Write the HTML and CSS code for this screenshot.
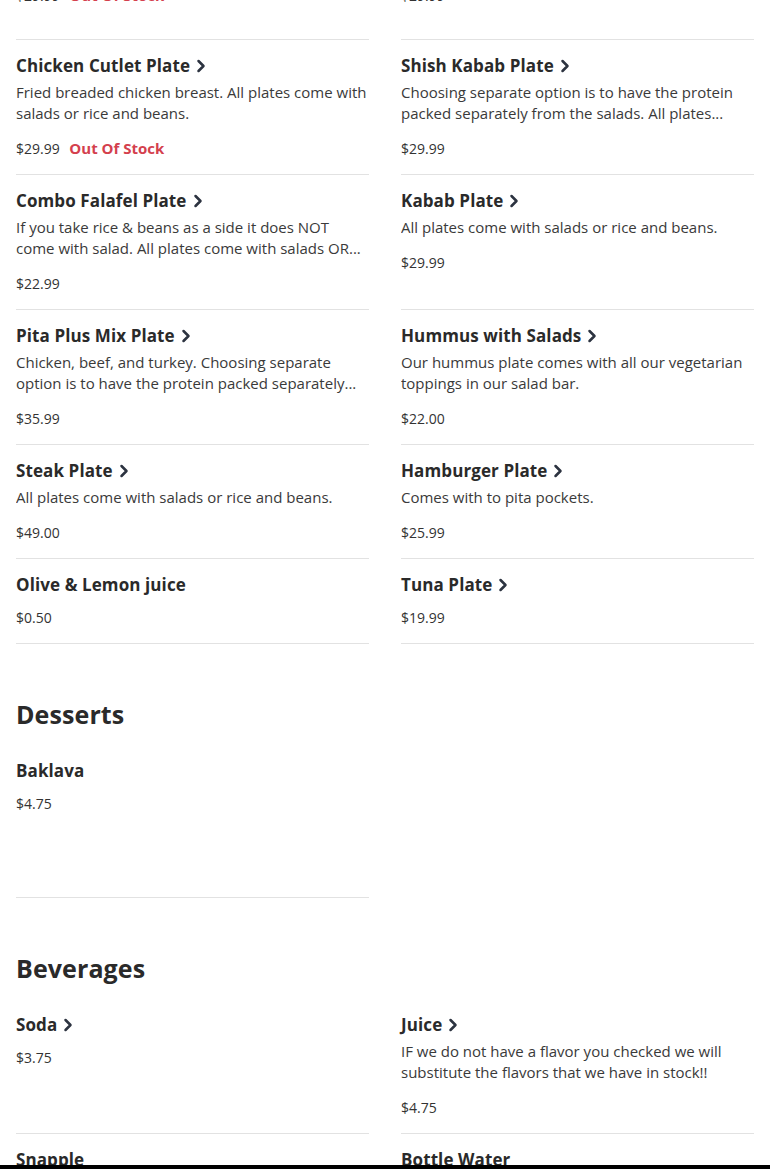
FILE: index.html
```html
<!DOCTYPE html>
<html lang="en">
<head>
<meta charset="utf-8">
<title>Menu</title>
<link rel="stylesheet" href="styles.css">
</head>
<body>
<main class="menu">
  <div class="grid lead">
    <div class="item stub"><div class="price">$29.99 <span class="oos">Out Of Stock</span></div></div>
    <div class="item stub"><div class="price">$29.99</div></div>
  </div>
  <div class="grid">
    <div class="item">
      <div class="name">Chicken Cutlet Plate <svg class="chev" viewBox="0 0 10 14"><path d="M2.5 2 L7.5 7 L2.5 12"/></svg></div>
      <p class="desc">Fried breaded chicken breast. All plates come with salads or rice and beans.</p>
      <div class="price">$29.99 <span class="oos">Out Of Stock</span></div>
    </div>
    <div class="item">
      <div class="name">Shish Kabab Plate <svg class="chev" viewBox="0 0 10 14"><path d="M2.5 2 L7.5 7 L2.5 12"/></svg></div>
      <p class="desc">Choosing separate option is to have the protein packed separately from the salads. All plates...</p>
      <div class="price">$29.99</div>
    </div>
    <div class="item">
      <div class="name">Combo Falafel Plate <svg class="chev" viewBox="0 0 10 14"><path d="M2.5 2 L7.5 7 L2.5 12"/></svg></div>
      <p class="desc">If you take rice &amp; beans as a side it does NOT come with salad. All plates come with salads OR...</p>
      <div class="price">$22.99</div>
    </div>
    <div class="item">
      <div class="name">Kabab Plate <svg class="chev" viewBox="0 0 10 14"><path d="M2.5 2 L7.5 7 L2.5 12"/></svg></div>
      <p class="desc">All plates come with salads or rice and beans.</p>
      <div class="price">$29.99</div>
    </div>
    <div class="item">
      <div class="name">Pita Plus Mix Plate <svg class="chev" viewBox="0 0 10 14"><path d="M2.5 2 L7.5 7 L2.5 12"/></svg></div>
      <p class="desc">Chicken, beef, and turkey. Choosing separate option is to have the protein packed separately...</p>
      <div class="price">$35.99</div>
    </div>
    <div class="item">
      <div class="name">Hummus with Salads <svg class="chev" viewBox="0 0 10 14"><path d="M2.5 2 L7.5 7 L2.5 12"/></svg></div>
      <p class="desc">Our hummus plate comes with all our vegetarian toppings in our salad bar.</p>
      <div class="price">$22.00</div>
    </div>
    <div class="item">
      <div class="name">Steak Plate <svg class="chev" viewBox="0 0 10 14"><path d="M2.5 2 L7.5 7 L2.5 12"/></svg></div>
      <p class="desc">All plates come with salads or rice and beans.</p>
      <div class="price">$49.00</div>
    </div>
    <div class="item">
      <div class="name">Hamburger Plate <svg class="chev" viewBox="0 0 10 14"><path d="M2.5 2 L7.5 7 L2.5 12"/></svg></div>
      <p class="desc">Comes with to pita pockets.</p>
      <div class="price">$25.99</div>
    </div>
    <div class="item">
      <div class="name">Olive &amp; Lemon juice</div>
      <div class="price">$0.50</div>
    </div>
    <div class="item">
      <div class="name">Tuna Plate <svg class="chev" viewBox="0 0 10 14"><path d="M2.5 2 L7.5 7 L2.5 12"/></svg></div>
      <div class="price">$19.99</div>
    </div>
  </div>

  <h2 class="section-title">Desserts</h2>
  <div class="grid">
    <div class="item tall">
      <div class="name">Baklava</div>
      <div class="price">$4.75</div>
    </div>
  </div>

  <h2 class="section-title">Beverages</h2>
  <div class="grid">
    <div class="item">
      <div class="name">Soda <svg class="chev" viewBox="0 0 10 14"><path d="M2.5 2 L7.5 7 L2.5 12"/></svg></div>
      <div class="price">$3.75</div>
    </div>
    <div class="item">
      <div class="name">Juice <svg class="chev" viewBox="0 0 10 14"><path d="M2.5 2 L7.5 7 L2.5 12"/></svg></div>
      <p class="desc">IF we do not have a flavor you checked we will substitute the flavors that we have in stock!!</p>
      <div class="price">$4.75</div>
    </div>
    <div class="item">
      <div class="name">Snapple</div>
      <div class="price">$3.75</div>
    </div>
    <div class="item">
      <div class="name">Bottle Water</div>
      <div class="price">$1.50</div>
    </div>
  </div>
</main>
<div class="bottom-bar"></div>
</body>
</html>
```

FILE: styles.css
```css
html, body {
  margin: 0;
  padding: 0;
  background: #ffffff;
}
body {
  font-family: "Open Sans", "Liberation Sans", sans-serif;
  color: #333333;
}
.menu {
  padding: 0 16px 40px;
}
.grid {
  display: grid;
  grid-template-columns: 1fr 1fr;
  column-gap: 32px;
}
.grid.lead {
  margin-top: -15px;
}
.item {
  padding: 14px 0 15px;
  border-bottom: 1px solid #e2e2e2;
}
.item.stub {
  padding: 0 0 33px;
}
.item.tall {
  padding-bottom: 83px;
}
.name {
  display: flex;
  align-items: center;
  gap: 6px;
  font-size: 17px;
  font-weight: 700;
  line-height: 24px;
  color: #2a2a2a;
  letter-spacing: 0.1px;
}
.chev {
  width: 10px;
  height: 14px;
  flex: none;
}
.chev path {
  fill: none;
  stroke: #2c3340;
  stroke-width: 2.5;
  stroke-linecap: round;
  stroke-linejoin: round;
}
.desc {
  margin: 4px 0 14px;
  font-size: 15px;
  line-height: 21px;
  color: #3a3a3a;
  display: -webkit-box;
  -webkit-box-orient: vertical;
  -webkit-line-clamp: 2;
  overflow: hidden;
}
.price {
  margin-top: 10px;
  font-size: 14px;
  line-height: 21px;
  color: #333333;
}
.stub .price {
  margin-top: 0;
}
.oos {
  margin-left: 6px;
  font-size: 15px;
  font-weight: 700;
  color: #d4404d;
}
.section-title {
  margin: 54px 0 15px;
  font-size: 25px;
  line-height: 32px;
  font-weight: 700;
  letter-spacing: 0.1px;
  color: #2a2a2a;
}
.bottom-bar {
  position: fixed;
  left: 0;
  right: 0;
  bottom: 0;
  height: 4px;
  background: #000000;
}
```
